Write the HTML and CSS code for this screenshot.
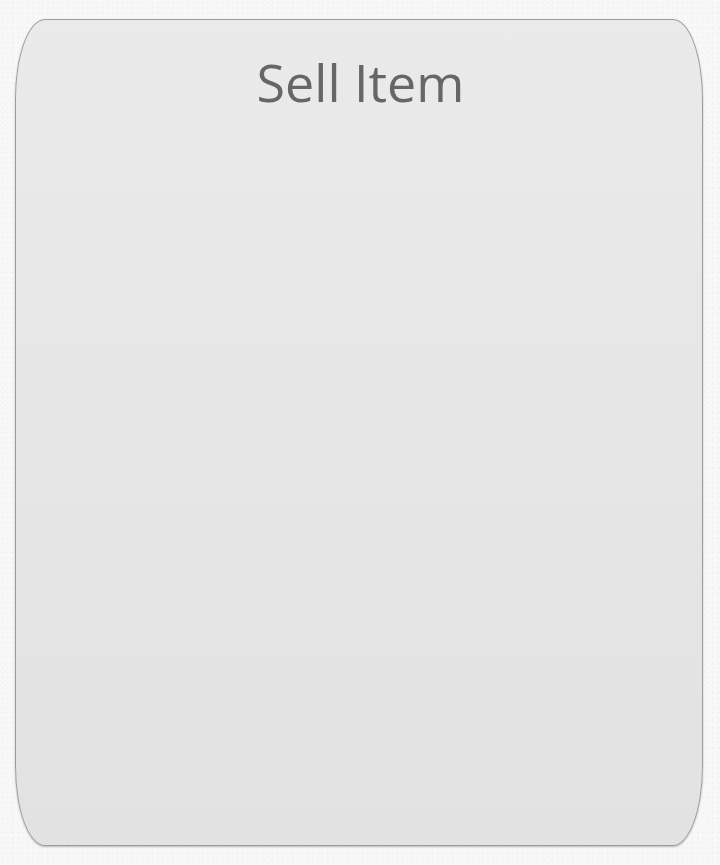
FILE: index.html
```html
<!DOCTYPE html>
<html lang="en">
<head>
<meta charset="utf-8">
<title>Sell Item</title>
<link rel="stylesheet" href="styles.css">
</head>
<body>
<div class="page">
  <section class="card">
    <h1 class="title">Sell Item</h1>
  </section>
</div>
</body>
</html>
```
FILE: styles.css
```css
html, body {
  margin: 0;
  padding: 0;
}
body {
  width: 720px;
  height: 865px;
  background-color: #f8f8f8;
  background-image:
    radial-gradient(rgba(0,0,0,0.025) 1px, transparent 1px),
    radial-gradient(rgba(0,0,0,0.02) 1px, transparent 1px);
  background-size: 5px 5px, 7px 7px;
  background-position: 0 0, 2px 3px;
  font-family: "Open Sans", "Noto Sans", sans-serif;
  overflow: hidden;
}
.page {
  padding: 19px 17px 19px 15px;
  box-sizing: border-box;
  height: 865px;
  display: flex;
}
.card {
  flex: 1;
  box-sizing: border-box;
  border: 1px solid #9c9c9c;
  border-radius: 30px / 80px;
  background: linear-gradient(to bottom, #eaeaea 0%, #e2e2e2 100%);
  box-shadow: 0 1px 2px rgba(0,0,0,0.25);
  display: flex;
  flex-direction: column;
  align-items: center;
}
.title {
  margin: 0;
  padding-top: 30px;
  padding-left: 3px;
  font-size: 52px;
  line-height: 64px;
  font-weight: 400;
  color: #666666;
}
```
